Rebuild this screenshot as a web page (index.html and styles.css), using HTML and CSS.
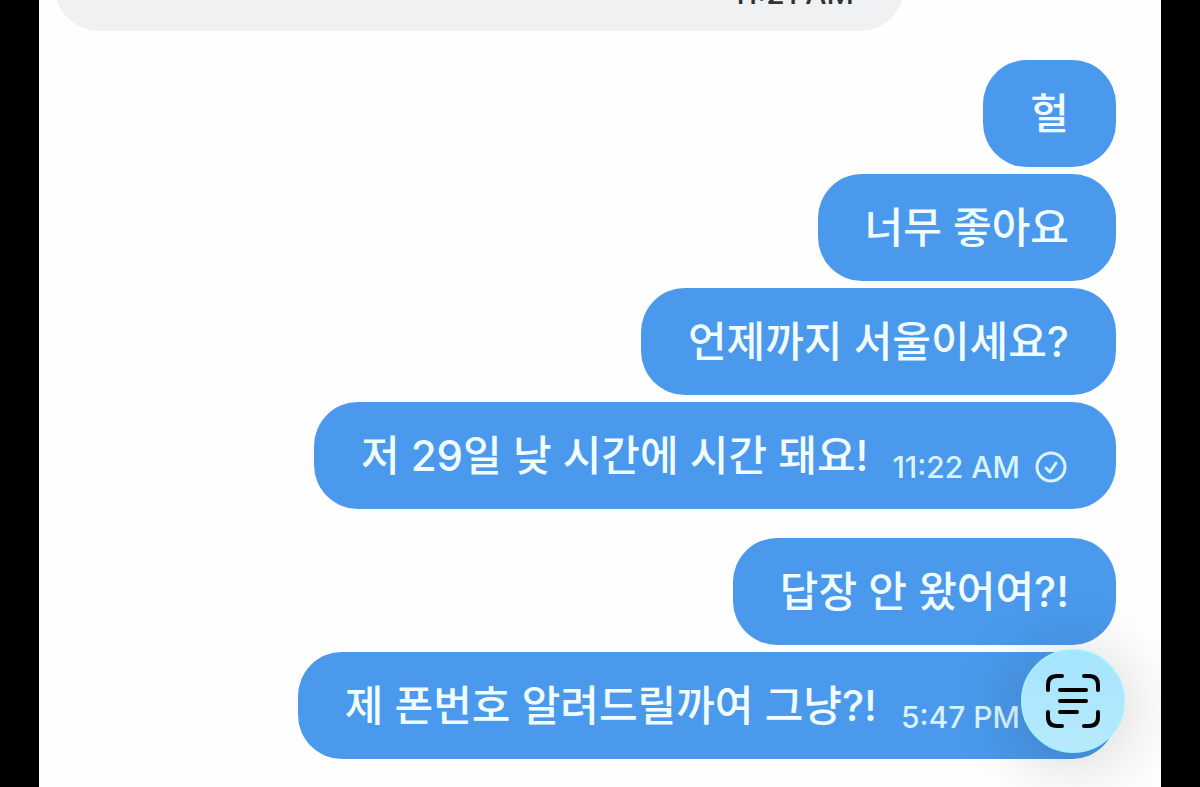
FILE: index.html
```html
<!DOCTYPE html>
<html lang="ko">
<head>
<meta charset="utf-8">
<title>Chat</title>
<meta name="viewport" content="width=device-width, initial-scale=1">
<link rel="stylesheet" href="styles.css">
</head>
<body>
<main class="chat">
  <div class="bubble received"><time class="time">11:21 AM</time></div>
  <section class="group">
    <p class="bubble sent">헐</p>
    <p class="bubble sent">너무 좋아요</p>
    <p class="bubble sent">언제까지 서울이세요?</p>
    <div class="bubble sent">
      <span>저 29일 낮 시간에 시간 돼요!</span>
      <span class="meta"><time class="time">11:22 AM</time>
        <svg class="check" viewBox="0 0 32 32" aria-hidden="true"><circle cx="16" cy="16" r="14"/><path d="M11 17l4 4 6-9"/></svg></span>
    </div>
  </section>
  <section class="group">
    <p class="bubble sent">답장 안 왔어여?!</p>
    <div class="bubble sent">
      <span>제 폰번호 알려드릴까여 그냥?!</span>
      <span class="meta"><time class="time">5:47 PM</time>
        <svg class="check" viewBox="0 0 32 32" aria-hidden="true"><circle cx="16" cy="16" r="14"/><path d="M11 17l4 4 6-9"/></svg></span>
    </div>
  </section>
  <button class="scan" type="button" aria-label="Scan text">
    <svg viewBox="0 0 56 56" aria-hidden="true">
      <path class="frame" d="M3 17V12Q3 3 12 3H17M39 3H44Q53 3 53 12V17M53 39V44Q53 53 44 53H39M17 53H12Q3 53 3 44V39"/>
      <path class="lines" d="M15 17H41M15 28H41M15 39H32"/>
    </svg>
  </button>
</main>
</body>
</html>
```
FILE: styles.css
```css
* {
  box-sizing: border-box;
}

body {
  margin: 0;
  background: #000;
  font-family: Inter, "Noto Sans CJK KR", sans-serif;
  font-weight: 500;
}

.chat {
  position: relative;
  min-height: 100vh;
  margin: 0 39px;
  padding: 0 45px 28px 16px;
  overflow: hidden;
  background: #fefefe;
  display: flex;
  flex-direction: column;
  gap: 29px;
}

.bubble {
  margin: 0;
  border-radius: 44px;
  font-size: 42px;
  line-height: 59px;
}

/* The thread is scrolled, so the oldest message runs off the top. */
.received {
  display: flex;
  align-items: flex-end;
  justify-content: flex-end;
  width: 80%;
  min-height: 107px;
  margin-top: -76px;
  padding: 20px 50px;
  background: #eff1f3;
  color: #333;
}

.group {
  display: flex;
  flex-direction: column;
  align-items: flex-end;
  gap: 7px;
}

.sent {
  display: flex;
  align-items: flex-end;
  gap: 24px;
  padding: 24px 47px;
  background: #4a99ec;
  color: #f0fcff;
}

.meta {
  display: flex;
  align-items: center;
  gap: 15px;
  margin-right: 2px;
  color: #d8f4ff;
}

.time {
  font-size: 30px;
  line-height: 36px;
}

.check {
  width: 32px;
  height: 32px;
  fill: none;
  stroke: currentColor;
  stroke-width: 3;
  stroke-linecap: round;
  stroke-linejoin: round;
}

.scan {
  position: absolute;
  right: 36px;
  bottom: 34px;
  display: flex;
  align-items: center;
  justify-content: center;
  width: 104px;
  height: 104px;
  padding: 0;
  border: 2px solid #a5f0ff;
  border-radius: 50%;
  background: linear-gradient(#a4e5ff, #b8e9fb);
  box-shadow: 0 8px 72px rgba(0, 0, 0, 0.2);
}

.scan svg {
  width: 56px;
  height: 56px;
  fill: none;
  stroke: #000;
  stroke-width: 4;
  stroke-linecap: round;
}
```
